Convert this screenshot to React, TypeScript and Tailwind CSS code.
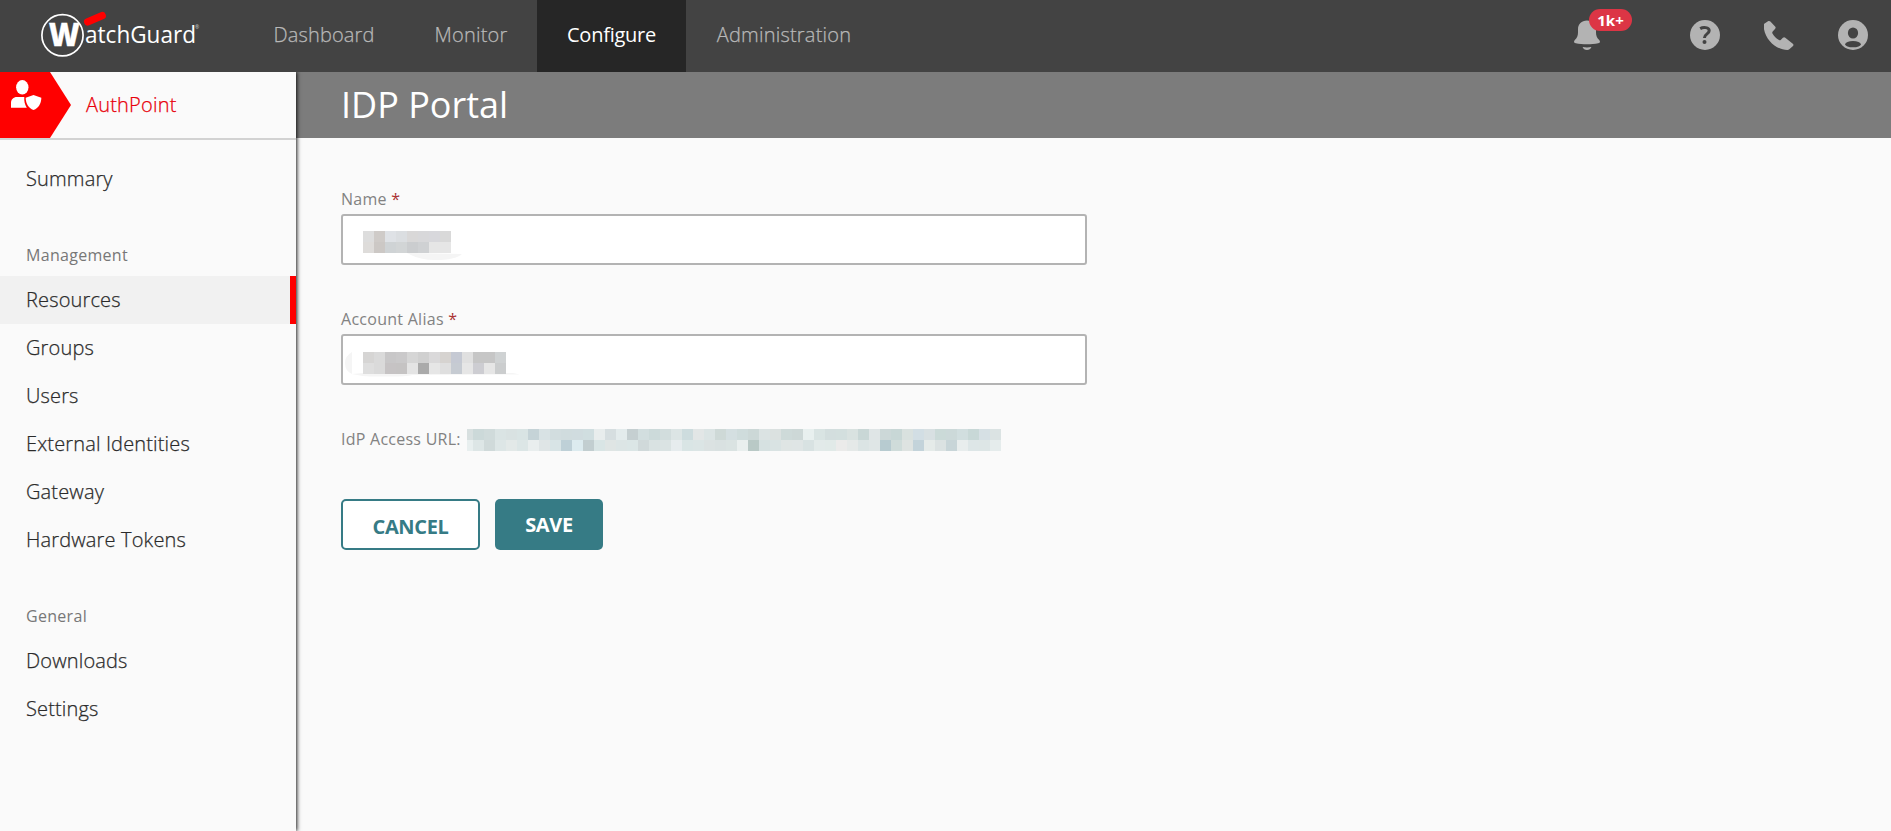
type MosaicProps = { rows: string[][]; lead?: number; smudge?: string; className?: string };

const CELL = 11;

function Mosaic({ rows, lead = 0, smudge, className = "" }: MosaicProps) {
  const width = rows[0].length * CELL - (lead ? CELL - lead : 0);
  return (
    <svg width={width} height={rows.length * CELL} className={`overflow-visible ${className}`} aria-hidden="true">
      {smudge && <path d={smudge} fill="#f5f5f5" />}
      {rows.map((row, y) =>
        row.map((color, i) => (
          <rect
            key={`${y}-${i}`}
            x={lead ? (i === 0 ? 0 : lead + (i - 1) * CELL) : i * CELL}
            y={y * CELL}
            width={lead && i === 0 ? lead : CELL}
            height={CELL}
            fill={`#${color}`}
            shapeRendering="crispEdges"
          />
        ))
      )}
    </svg>
  );
}

const nameCells = [
  "dddddd cfcbc8 dfe2e6 dbdee1 d9d8d8 d8d8da d8d8dc d9d9d9".split(" "),
  "dedcda ccc8c5 cfd3d5 d2d5d6 cbcdcf cfd1d3 e6e6e6 e6e6e6".split(" "),
];

const aliasCells = [
  "d6d5d4 dadada c8c7c8 cac9ca d6d6d6 d0d0d0 dad9da d6d3d0 c5c9d3 e0e0e0 c6c6c6 c6c6c6 cfd2d3".split(" "),
  "dedede dadada c6c3c4 c5c3c3 e4e4e4 aaaaaa e6e6e6 dfdfdf c6cbd2 e6e6e6 cdcdd2 e6e6e6 cbcdce".split(" "),
];

const urlCells = [
  "d8e0e0 ccd9d9 d0dbdb dae4e4 d9e2e2 d9e4e4 c5d3d7 d8e2e4 d2dddf d0dcde d0dcdf d0dee0 e8eded d6dee0 e3ebec c5cfd1 d2dedf ccdada d2dddd dce5e5 cddcde e2e6e6 dbe4e4 ced9d7 d4dfe1 cfdcdc ccd8d7 dbe3e3 dbe1e0 cedad9 cdd8d7 e8f0ef d9e4e3 d3dede d3dfde d9e2e0 c9d7d6 dfe5e6 ccd8d8 c8d7d6 d9e1df d2dee4 d8e0e2 cbdad8 ccd9d9 d1dedf c8d8d7 d6e0e4 dbe3e3".split(" "),
  "e8efef dde6e6 d0dada dde6e6 e3e9e8 dce6e6 e9eeee dfe5e6 d8e4e6 bed0d7 dcebef c2ced0 d9e5e5 dfe5e4 dce5e5 dbe6e6 d0d9da d9e2e2 dae3e3 e6ecee d9e5e5 dbe5e5 dbe2e2 d9e1e1 dae3e2 e9efee b9c9c6 d6e1e1 d9e3e3 dfe5e4 dfe5e5 d8e2e2 e2eae9 e1eae8 ebebea e5e9e8 dbe4e4 dfe6e6 b7cbd0 cfdcda dee3e1 c3d3da e5ebe9 dbe2e2 c8d5d8 e8eded dde6e7 dde6e6 e5ecec".split(" "),
];

function Logo() {
  return (
    <svg width="170" height="60" viewBox="36 5 170 60" className="shrink-0" role="img" aria-label="WatchGuard">
      <circle cx="62.500" cy="36.300" r="20.600" fill="none" stroke="#fff" strokeWidth="1.700" />
      <text x="48.800" y="47.200" textLength="31" lengthAdjust="spacingAndGlyphs" fill="#fff" stroke="#fff" strokeWidth="0.300" fontSize="31" className="font-['Open_Sans',sans-serif] font-extrabold">W</text>
      <path d="M87.700 22.900 102.200 16.600" fill="none" stroke="#f00" strokeWidth="7.400" strokeLinecap="round" />
      <text x="85" y="43.500" textLength="111" lengthAdjust="spacingAndGlyphs" fill="#fff" fontSize="23" className="font-['Open_Sans',sans-serif]">atchGuard</text>
      <text x="195" y="29.500" fill="#ccc" fontSize="5" className="font-['Open_Sans',sans-serif]">®</text>
    </svg>
  );
}

function BellIcon() {
  return (
    <svg width="26" height="30" viewBox="0 0 26 30" fill="#b3b3b3" aria-hidden="true">
      <path d="M13 0.500C7.500 0.500 4 4 4 9.200v3.400c0 3.400-1 5.400-3.200 7.400C-.6 21.600 0 23 1.800 23.200 5 23.800 9 24.200 13 24.200s8-.4 11.200-1c1.800-.2 2.400-1.600 1-3.200C23 18 22 16 22 12.600V9.200C22 4 18.500 0.500 13 0.500Z" />
      <path d="M8.600 27c2.800.5 6 .5 8.800 0-.6 1.900-2.300 3-4.400 3S9.200 28.900 8.600 27Z" />
    </svg>
  );
}

function HelpIcon() {
  return (
    <svg width="30" height="30" viewBox="0 0 30 30" aria-hidden="true">
      <circle cx="15" cy="15" r="15" fill="#b3b3b3" />
      <path d="M10.200 8.600c2.800-1.600 9-1.700 9 2.200 0 3.200-4.800 3-4.800 7.200" fill="none" stroke="#434343" strokeWidth="3" />
      <circle cx="14.500" cy="21.900" r="2" fill="#434343" />
    </svg>
  );
}

function PhoneIcon() {
  return (
    <svg width="30" height="30" viewBox="0 0 30 30" fill="#b3b3b3" aria-hidden="true">
      <path d="M.6 3.400 4 1.200c.9-.5 1.700-.4 2.400.3l4.700 4.900c.7.800.7 1.500.1 2.300L8.700 11.600c-.5.600-.6 1.200-.2 1.800 1.600 2.700 3.700 4.900 6.500 6.700.7.400 1.200.3 1.700-.2l2.200-2.100c.8-.8 1.600-.8 2.400-.1l7.500 6.100c.8.700.9 1.400.2 2.200l-3.700 3.300c-.5.500-1.100.7-1.900.7C11.600 29.800-.1 18.800-.4 5.400c0-.9.300-1.500 1-2Z" />
    </svg>
  );
}

function AccountIcon() {
  return (
    <svg width="30" height="30" viewBox="0 0 30 30" aria-hidden="true">
      <circle cx="15" cy="15" r="15" fill="#b3b3b3" />
      <ellipse cx="15" cy="13" rx="5.100" ry="5.600" fill="#434343" />
      <ellipse cx="15" cy="24.200" rx="7.800" ry="3.100" fill="#434343" />
    </svg>
  );
}

function AuthPointIcon() {
  return (
    <svg width="71" height="66" viewBox="0 0 71 66" className="shrink-0" aria-hidden="true">
      <path d="M0 0H50L71 33 50 66H0Z" fill="#f00" />
      <ellipse cx="22.300" cy="15.300" rx="6.200" ry="7.300" fill="#fff" />
      <path d="M11 35.700V31c0-3.600 2.400-6 6-6h7.300c-.3 4 .5 7.600 2.500 10.700Z" fill="#fff" />
      <path d="M33.500 23l7.800 2.800c0 5.500-2.600 10.300-7.800 12.300-5.200-2-7.800-6.800-7.800-12.300Z" fill="#fff" />
    </svg>
  );
}

const tabs = [
  { label: "Dashboard", look: "w-[160px] pl-[2px] font-light tracking-[0.12px] text-[#b8b8b8] [-webkit-text-stroke:0.25px]" },
  { label: "Monitor", look: "w-[134px] pl-[2px] font-light tracking-[0.2px] text-[#b8b8b8] [-webkit-text-stroke:0.25px]" },
  { label: "Configure", look: "w-[149px] bg-[#262626] tracking-[-0.25px] text-white" },
  { label: "Administration", look: "w-[195px] pl-[1px] font-light tracking-[0.22px] text-[#b8b8b8] [-webkit-text-stroke:0.25px]" },
];

function NavItem({ label, active = false }: { label: string; active?: boolean }) {
  return (
    <a
      className={`flex h-12 items-center pl-[26px] text-[20px] font-light tracking-[0.15px] text-[#2a2a2a] [-webkit-text-stroke:0.25px] ${
        active ? "border-r-[6px] border-[#f00] bg-[#f1f1f1]" : ""
      }`}
    >
      {label}
    </a>
  );
}

function NavHeading({ children }: { children: string }) {
  return <h2 className="mt-7 flex h-[45px] items-center pl-[26px] pt-[2px] text-[16px] tracking-[0.3px] text-[#777]">{children}</h2>;
}

function Field({ label, cells, smudge, inset }: { label: string; cells: string[][]; smudge: string; inset: string }) {
  return (
    <div className="flex flex-col">
      <div className="h-[29px] text-[16px] leading-[29px] tracking-[0.27px] text-[#828282]">
        {label} <span className="text-[#a33]">*</span>
      </div>
      <div className={`flex h-[51px] w-[746px] items-start rounded-[3px] border-2 border-[#b3b3b3] bg-white pl-5 ${inset}`}>
        <Mosaic rows={cells} smudge={smudge} />
      </div>
    </div>
  );
}

export default function App() {
  return (
    <div className="flex h-[831px] w-full flex-col overflow-hidden bg-[#fafafa] font-['Open_Sans',sans-serif]">
      <header className="flex h-[72px] shrink-0 items-center bg-[#434343]">
        <div className="flex w-[243px] pb-1 pl-9">
          <Logo />
        </div>
        <nav className="flex h-full">
          {tabs.map((t) => (
            <a key={t.label} className={`flex h-full items-center justify-center pb-[2px] text-[20px] ${t.look}`}>
              {t.label}
            </a>
          ))}
        </nav>
        <div className="ml-auto flex items-center pr-[23px] pb-[2px]">
          <div className="relative mr-[90px]">
            <BellIcon />
            <span className="absolute -top-[11px] left-[15px] flex h-[22px] w-[43px] items-center justify-center rounded-full bg-[#dc3545] text-[15px] font-bold text-white">
              1k+
            </span>
          </div>
          <div className="mr-11"><HelpIcon /></div>
          <div className="mr-11"><PhoneIcon /></div>
          <AccountIcon />
        </div>
      </header>
      <div className="flex min-h-0 flex-1">
        <aside className="z-10 flex w-[296px] shrink-0 flex-col bg-[#fafafa] shadow-[1px_0_4px_rgba(0,0,0,0.9)] [clip-path:inset(0_-8px_0_0)]">
          <div className="flex h-[68px] shrink-0 border-b-2 border-[#d2d2d2]">
            <AuthPointIcon />
            <span className="flex items-center pl-[15px] text-[20px] font-light tracking-[0.2px] text-[#e8000b] [-webkit-text-stroke:0.25px]">AuthPoint</span>
          </div>
          <div className="pt-[15px]">
            <NavItem label="Summary" />
            <NavHeading>Management</NavHeading>
            <NavItem label="Resources" active />
            <NavItem label="Groups" />
            <NavItem label="Users" />
            <NavItem label="External Identities" />
            <NavItem label="Gateway" />
            <NavItem label="Hardware Tokens" />
            <NavHeading>General</NavHeading>
            <NavItem label="Downloads" />
            <NavItem label="Settings" />
          </div>
        </aside>
        <main className="flex min-w-0 flex-1 flex-col">
          <h1 className="flex h-[66px] items-center bg-[#7c7c7c] pl-[45px] text-[36px] text-white">IDP Portal</h1>
          <div className="flex flex-col pl-[45px] pt-[47px]">
            <Field label="Name" cells={nameCells} inset="pt-[15px]" smudge="M44 22 Q56 29 72 29 Q92 29 99 23Z" />
            <div className="mt-10">
              <Field
                label="Account Alias"
                cells={aliasCells}
                inset="pt-4"
                smudge="M-11 0 Q-18 4 -18 11 Q-18 19 -11 22Z M-11 22 Q0 25 20 24.500 Q40 25 50 23 L157 22.500 L150 21 L0 21Z"
              />
            </div>
            <div className="mt-[43px] flex h-[23px] items-center text-[16px] tracking-[0.25px] text-[#828282]">
              <span className="w-[126px] pb-[2px]">IdP Access URL:</span>
              <Mosaic rows={urlCells} lead={6} />
            </div>
            <div className="mt-12 flex gap-[15px]">
              <button className="h-[51px] w-[139px] rounded-[5px] border-2 border-[#367b85] bg-white pt-1 text-[20px] font-bold tracking-[-0.35px] text-[#367b85]">
                CANCEL
              </button>
              <button className="h-[51px] w-[108px] rounded-[5px] bg-[#367b85] text-[20px] font-bold tracking-[-0.35px] text-white">SAVE</button>
            </div>
          </div>
        </main>
      </div>
    </div>
  );
}
